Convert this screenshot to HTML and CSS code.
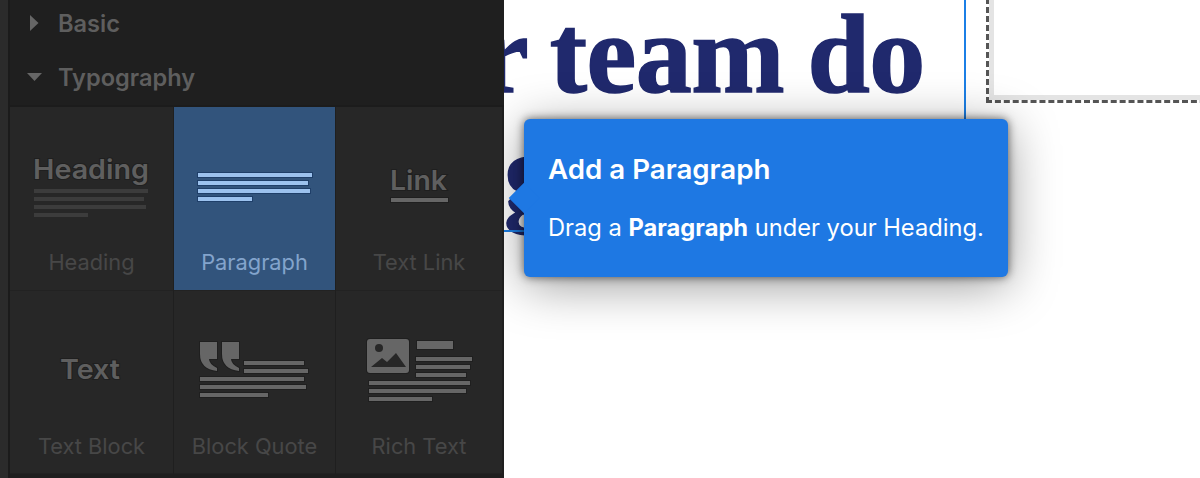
FILE: index.html
```html
<!DOCTYPE html>
<html lang="en">
<head>
  <meta charset="UTF-8" />
  <title>Add a Paragraph</title>
  <link rel="stylesheet" href="styles.css">
</head>
<body>
  <!-- Add elements panel -->
  <aside class="panel">
    <div class="strip"></div>
    <div class="panel-main">
      <div class="section-row section-first">
        <svg class="caret" width="10" height="16" viewBox="0 0 10 16"><polygon points="0,0 8.5,8 0,16" /></svg>
        <span>Basic</span>
      </div>
      <div class="section-row section-second">
        <svg class="caret" width="16" height="10" viewBox="0 0 16 10"><polygon points="0,1 15,1 7.5,9" /></svg>
        <span>Typography</span>
      </div>
      <div class="grid">
        <div class="cell">
          <div class="thumb">
            <svg width="130" height="72" viewBox="0 0 130 72">
              <text class="thumb-word" x="6" y="25" textLength="116" lengthAdjust="spacingAndGlyphs" font-size="27">Heading</text>
              <g class="bars-dim">
                <rect x="7" y="35" width="114" height="4" />
                <rect x="7" y="43" width="110" height="4" />
                <rect x="7" y="51" width="112" height="4" />
                <rect x="7" y="59" width="54" height="4" />
              </g>
            </svg>
          </div>
          <div class="cell-label">Heading</div>
        </div>
        <div class="cell cell-active">
          <div class="thumb">
            <svg width="130" height="72" viewBox="0 0 130 72">
              <g class="bars-light">
                <rect x="8" y="19" width="114" height="4" />
                <rect x="8" y="27" width="110" height="4" />
                <rect x="8" y="35" width="112" height="4" />
                <rect x="8" y="43" width="54" height="4" />
              </g>
            </svg>
          </div>
          <div class="cell-label">Paragraph</div>
        </div>
        <div class="cell">
          <div class="thumb">
            <svg width="130" height="72" viewBox="0 0 130 72">
              <text class="thumb-word" x="36" y="36" textLength="57" lengthAdjust="spacingAndGlyphs" font-size="27">Link</text>
              <rect class="bar-solid" x="37" y="44" width="57" height="4" />
            </svg>
          </div>
          <div class="cell-label">Text Link</div>
        </div>
        <div class="cell">
          <div class="thumb">
            <svg width="130" height="72" viewBox="0 0 130 72">
              <text class="thumb-word" x="33" y="41" textLength="60" lengthAdjust="spacingAndGlyphs" font-size="27">Text</text>
            </svg>
          </div>
          <div class="cell-label">Text Block</div>
        </div>
        <div class="cell">
          <div class="thumb">
            <svg width="130" height="72" viewBox="0 0 130 72">
              <g class="bar-solid">
                <path d="M10 4h17v17h-8q0 5 8 9v3q-17 -2 -17 -17z" />
                <path d="M32 4h17v17h-8q0 5 8 9v3q-17 -2 -17 -17z" />
                <rect x="54" y="23" width="60" height="4" />
                <rect x="54" y="31" width="64" height="4" />
                <rect x="10" y="39" width="104" height="4" />
                <rect x="10" y="47" width="106" height="4" />
                <rect x="10" y="55" width="68" height="4" />
              </g>
            </svg>
          </div>
          <div class="cell-label">Block Quote</div>
        </div>
        <div class="cell">
          <div class="thumb">
            <svg width="130" height="72" viewBox="0 0 130 72">
              <g class="bar-solid">
                <rect x="13" y="1" width="42" height="34" rx="3" />
                <rect x="63" y="3" width="36" height="8" />
                <rect x="62" y="19" width="56" height="4" />
                <rect x="62" y="27" width="54" height="4" />
                <rect x="62" y="35" width="50" height="4" />
                <rect x="15" y="43" width="101" height="4" />
                <rect x="15" y="51" width="97" height="4" />
                <rect x="15" y="59" width="63" height="4" />
              </g>
              <circle class="cut" cx="25" cy="10" r="4" />
              <path class="cut" d="M17 29l11 -9 5 4 9 -9 10 14z" />
            </svg>
          </div>
          <div class="cell-label">Rich Text</div>
        </div>
      </div>
    </div>
  </aside>

  <!-- Page being edited -->
  <main class="canvas">
    <div class="headline headline-one">r team do</div>
    <div class="headline headline-two">g</div>
    <div class="guide guide-v"></div>
    <div class="guide guide-h"></div>
    <div class="dropzone"></div>

    <div class="tip">
      <div class="tip-arrow"></div>
      <h2>Add a Paragraph</h2>
      <p>Drag a <b>Paragraph</b> under your Heading.</p>
    </div>
  </main>
</body>
</html>
```

FILE: styles.css
```css
* {
  box-sizing: border-box;
}

body {
  margin: 0;
  height: 478px;
  display: flex;
  overflow: hidden;
  background: #fff;
  font-family: Inter, Arial, sans-serif;
}

/* Left panel */
.panel {
  width: 504px;
  height: 478px;
  flex: none;
  display: flex;
  background: #1f1f1f;
  position: relative;
  z-index: 2;
}

.strip {
  width: 10px;
  background: #2b2b2b;
  border-right: 2px solid #1b1b1b;
}

.panel-main {
  flex: 1;
  display: flex;
  flex-direction: column;
}

.section-row {
  display: flex;
  align-items: center;
  color: #5e5e5e;
  font-size: 23.6px;
  font-weight: 600;
}

.section-first {
  height: 46px;
  padding-left: 20px;
}

.section-first span {
  margin-left: 18px;
}

.section-second {
  height: 61px;
  padding: 3px 0 0 17px;
  border-bottom: 2px solid #1c1c1c;
}

.section-second span {
  margin-left: 15px;
}

.caret {
  fill: #666;
}

.grid {
  display: grid;
  grid-template-columns: 163px 161px 166px;
  grid-template-rows: 184px 183px;
  column-gap: 1px;
}

.cell {
  background: #272727;
  border-bottom: 1px solid #222;
  display: flex;
  flex-direction: column;
  align-items: center;
}

.cell-active {
  background: #32547c;
}

.thumb {
  height: 140px;
  padding-top: 47px;
}

.thumb svg {
  display: block;
}

.cell-label {
  font-size: 21.8px;
  line-height: 24px;
  margin-top: 3px;
  color: #474747;
}

.cell-active .cell-label {
  color: #83a4cc;
}

.thumb-word {
  fill: #5f5f5f;
  font-family: Inter, Arial, sans-serif;
  font-weight: 600;
  stroke: #1f1f1f;
  stroke-width: 2px;
  paint-order: stroke;
}

.bars-dim {
  fill: #3c3c3c;
}

.bars-light {
  fill: #9cc2ee;
  stroke: #1f3f69;
  stroke-width: 2px;
  paint-order: stroke;
}

.bar-solid {
  fill: #666;
  stroke: #1f1f1f;
  stroke-width: 2px;
  paint-order: stroke;
}

.cut {
  fill: #272727;
}

/* Canvas */
.canvas {
  flex: 1;
  position: relative;
  height: 478px;
  overflow: hidden;
}

.headline {
  position: absolute;
  font-family: "Liberation Serif", serif;
  font-weight: 700;
  font-size: 112px;
  line-height: 112px;
  letter-spacing: -.5px;
  word-spacing: -4px;
  -webkit-text-stroke: 1.5px #20296d;
  color: #20296d;
  white-space: nowrap;
}

.headline-one {
  left: -25px;
  top: -2px;
}

.headline-two {
  left: 0;
  top: 116px;
}

.guide {
  position: absolute;
  background: #1b7fe6;
}

.guide-v {
  left: 460px;
  top: 0;
  width: 2px;
  height: 120px;
}

.guide-h {
  left: 0;
  top: 230px;
  width: 22px;
  height: 2px;
}

.dropzone {
  position: absolute;
  left: 482px;
  top: -20px;
  width: 300px;
  height: 123px;
  border: 3px dashed #555;
  box-shadow: inset 0 0 0 5px #e4e4e4;
  background: #fff;
}

/* Tooltip */
.tip {
  position: absolute;
  left: 20px;
  top: 119px;
  width: 484px;
  height: 158px;
  padding: 34px 20px 0 24px;
  background: #1e78e3;
  border-radius: 6px;
  color: #fff;
  box-shadow: 0 0 10px rgba(0, 0, 0, .6), 0 8px 50px rgba(0, 0, 0, .4);
}

.tip-arrow {
  position: absolute;
  left: -15px;
  top: 64px;
  width: 30px;
  height: 30px;
  transform: rotate(45deg) scale(.72);
  background: #1e78e3;
}

.tip h2 {
  margin: 0;
  font-size: 27.7px;
  line-height: 32px;
  font-weight: 600;
}

.tip p {
  margin: 28px 0 0;
  font-size: 23.7px;
  line-height: 30px;
  white-space: nowrap;
}

.tip b {
  font-weight: 700;
}
```
